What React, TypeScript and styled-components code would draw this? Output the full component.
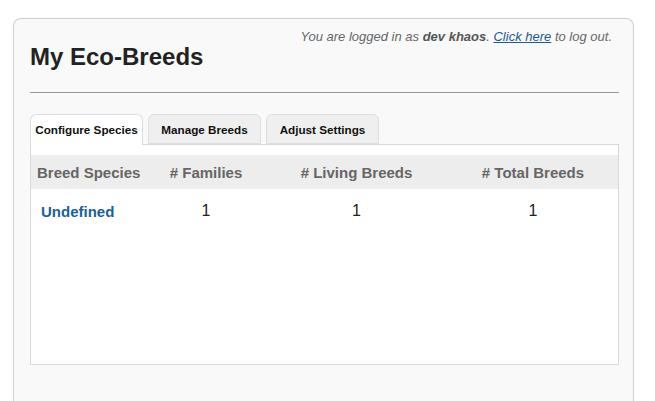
import React from 'react';
import styled, { createGlobalStyle } from 'styled-components';

const GlobalStyle = createGlobalStyle`
  html, body {
    margin: 0;
    padding: 0;
    background: #fff;
    font-family: "Liberation Sans", Arial, sans-serif;
  }
`;

interface Row {
  species: string;
  families: number;
  living: number;
  total: number;
}

const rows: Row[] = [{ species: 'Undefined', families: 1, living: 1, total: 1 }];

const tabs = ['Configure Species', 'Manage Breeds', 'Adjust Settings'];

export default function App() {
  return (
    <>
      <GlobalStyle />
      <Card>
        <LoginLine>
          You are logged in as <b>dev khaos</b>. <a href="#">Click here</a> to
          log out.
        </LoginLine>
        <Title>My Eco-Breeds</Title>
        <Divider />
        <TabBar>
          {tabs.map((t, i) => (
            <Tab key={t} $active={i === 0}>
              {t}
            </Tab>
          ))}
        </TabBar>
        <Panel>
          <Table>
            <HeadRow>
              <HeadCell $align="left">Breed Species</HeadCell>
              <HeadCell># Families</HeadCell>
              <HeadCell># Living Breeds</HeadCell>
              <HeadCell># Total Breeds</HeadCell>
            </HeadRow>
            {rows.map((r) => (
              <DataRow key={r.species}>
                <SpeciesLink href="#">{r.species}</SpeciesLink>
                <NumCell>{r.families}</NumCell>
                <NumCell>{r.living}</NumCell>
                <NumCell>{r.total}</NumCell>
              </DataRow>
            ))}
          </Table>
        </Panel>
      </Card>
    </>
  );
}

const Card = styled.div`
  box-sizing: border-box;
  width: 621px;
  height: 400px;
  margin: 18px 0 0 13px;
  padding: 0 14px 0 16px;
  background: #f9f9f9;
  border: 1px solid #d0d0d0;
  border-bottom: none;
  border-radius: 8px 8px 0 0;
`;

const LoginLine = styled.div`
  margin-top: 10px;
  padding-right: 7px;
  text-align: right;
  font-size: 13px;
  line-height: 16px;
  font-style: italic;
  color: #666;

  b {
    color: #555;
  }

  a {
    color: #1a5a96;
    text-decoration: underline;
  }
`;

const Title = styled.h1`
  margin: 0;
  font-size: 24px;
  line-height: 24px;
  font-weight: bold;
  color: #222;
`;

const Divider = styled.hr`
  margin: 23px 0 0;
  border: none;
  border-top: 1px solid #999;
  height: 0;
`;

const TabBar = styled.div`
  display: flex;
  gap: 5px;
  margin-top: 21px;
  position: relative;
  z-index: 1;
`;

const Tab = styled.div<{ $active?: boolean }>`
  box-sizing: border-box;
  width: 113px;
  height: ${(p) => (p.$active ? '31px' : '30px')};
  padding-bottom: ${(p) => (p.$active ? '1px' : '0')};
  display: flex;
  align-items: center;
  justify-content: center;
  font-size: 11.7px;
  font-weight: bold;
  color: #111;
  background: ${(p) => (p.$active ? '#fff' : '#efefef')};
  border: 1px solid #dddde3;
  border-bottom: ${(p) => (p.$active ? 'none' : '1px solid #dddde3')};
  border-radius: 6px 6px 0 0;
  margin-bottom: ${(p) => (p.$active ? '-1px' : '0')};
  cursor: pointer;
`;

const Panel = styled.div`
  box-sizing: border-box;
  height: 221px;
  padding-top: 10px;
  background: #fff;
  border: 1px solid #d8d8e0;
`;

const Table = styled.div`
  display: grid;
  grid-template-columns: 116px 118px 183px 1fr;
`;

const HeadRow = styled.div`
  display: contents;
`;

const HeadCell = styled.div<{ $align?: 'left' | 'center' }>`
  height: 34px;
  display: flex;
  align-items: center;
  justify-content: ${(p) => (p.$align === 'left' ? 'flex-start' : 'center')};
  padding-left: ${(p) => (p.$align === 'left' ? '6px' : '0')};
  white-space: nowrap;
  background: #ededed;
  font-size: 15px;
  font-weight: bold;
  color: #666;
`;

const DataRow = styled.div`
  display: contents;
`;

const SpeciesLink = styled.a`
  height: 44px;
  display: flex;
  align-items: center;
  padding-left: 10px;
  font-size: 15px;
  font-weight: bold;
  color: #1a5f9a;
  text-decoration: none;
`;

const NumCell = styled.div`
  height: 44px;
  display: flex;
  align-items: center;
  justify-content: center;
  font-size: 16px;
  color: #222;
`;
